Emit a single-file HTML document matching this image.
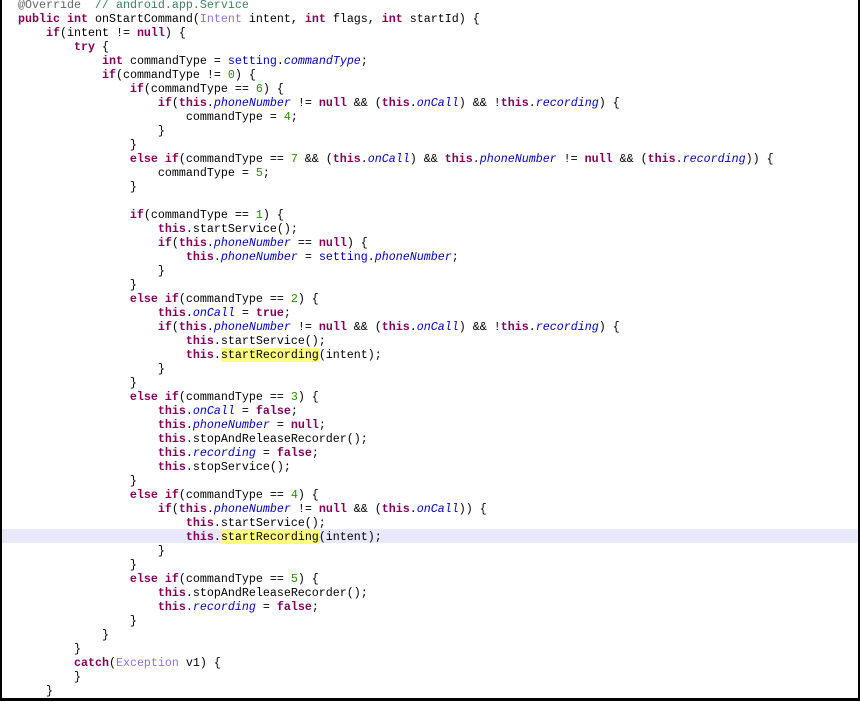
<!DOCTYPE html>
<html><head><style>
html,body{margin:0;padding:0;background:#fff;}
.wrap{position:absolute;left:0;top:0;width:856px;height:698px;border-left:2px solid #000;border-right:2px solid #000;border-bottom:3px solid #000;overflow:hidden;background:#fff;}
.hl{position:absolute;left:0;top:529px;width:856px;height:14px;background:#e8e8fa;}
pre{position:absolute;left:16px;top:-2px;margin:0;font-family:"Liberation Mono",monospace;font-size:11.67px;line-height:14px;color:#000;}
.k{color:#7f0055;font-weight:bold}
.f{color:#0000c0;font-style:italic}
.s{color:#0000c0}
.n{color:#2a8a00}
.t{color:#9370db}
.a{color:#646464}
.c{color:#3f7f5f}
.y{background:#ffff80}
</style></head><body><div class="wrap"><div class="hl"></div>
<pre><span class="a">@Override</span>  <span class="c">// android.app.Service</span>
<span class="k">public int</span> onStartCommand(<span class="t">Intent</span> intent, <span class="k">int</span> flags, <span class="k">int</span> startId) {
    <span class="k">if</span>(intent != <span class="k">null</span>) {
        <span class="k">try</span> {
            <span class="k">int</span> commandType = <span class="s">setting</span>.<span class="f">commandType</span>;
            <span class="k">if</span>(commandType != <span class="n">0</span>) {
                <span class="k">if</span>(commandType == <span class="n">6</span>) {
                    <span class="k">if</span>(<span class="k">this</span>.<span class="f">phoneNumber</span> != <span class="k">null</span> &amp;&amp; (<span class="k">this</span>.<span class="f">onCall</span>) &amp;&amp; !<span class="k">this</span>.<span class="f">recording</span>) {
                        commandType = <span class="n">4</span>;
                    }
                }
                <span class="k">else if</span>(commandType == <span class="n">7</span> &amp;&amp; (<span class="k">this</span>.<span class="f">onCall</span>) &amp;&amp; <span class="k">this</span>.<span class="f">phoneNumber</span> != <span class="k">null</span> &amp;&amp; (<span class="k">this</span>.<span class="f">recording</span>)) {
                    commandType = <span class="n">5</span>;
                }

                <span class="k">if</span>(commandType == <span class="n">1</span>) {
                    <span class="k">this</span>.startService();
                    <span class="k">if</span>(<span class="k">this</span>.<span class="f">phoneNumber</span> == <span class="k">null</span>) {
                        <span class="k">this</span>.<span class="f">phoneNumber</span> = <span class="s">setting</span>.<span class="f">phoneNumber</span>;
                    }
                }
                <span class="k">else if</span>(commandType == <span class="n">2</span>) {
                    <span class="k">this</span>.<span class="f">onCall</span> = <span class="k">true</span>;
                    <span class="k">if</span>(<span class="k">this</span>.<span class="f">phoneNumber</span> != <span class="k">null</span> &amp;&amp; (<span class="k">this</span>.<span class="f">onCall</span>) &amp;&amp; !<span class="k">this</span>.<span class="f">recording</span>) {
                        <span class="k">this</span>.startService();
                        <span class="k">this</span>.<span class="y">startRecording</span>(intent);
                    }
                }
                <span class="k">else if</span>(commandType == <span class="n">3</span>) {
                    <span class="k">this</span>.<span class="f">onCall</span> = <span class="k">false</span>;
                    <span class="k">this</span>.<span class="f">phoneNumber</span> = <span class="k">null</span>;
                    <span class="k">this</span>.stopAndReleaseRecorder();
                    <span class="k">this</span>.<span class="f">recording</span> = <span class="k">false</span>;
                    <span class="k">this</span>.stopService();
                }
                <span class="k">else if</span>(commandType == <span class="n">4</span>) {
                    <span class="k">if</span>(<span class="k">this</span>.<span class="f">phoneNumber</span> != <span class="k">null</span> &amp;&amp; (<span class="k">this</span>.<span class="f">onCall</span>)) {
                        <span class="k">this</span>.startService();
                        <span class="k">this</span>.<span class="y">startRecording</span>(intent);
                    }
                }
                <span class="k">else if</span>(commandType == <span class="n">5</span>) {
                    <span class="k">this</span>.stopAndReleaseRecorder();
                    <span class="k">this</span>.<span class="f">recording</span> = <span class="k">false</span>;
                }
            }
        }
        <span class="k">catch</span>(<span class="t">Exception</span> v1) {
        }
    }
</pre></div></body></html>
